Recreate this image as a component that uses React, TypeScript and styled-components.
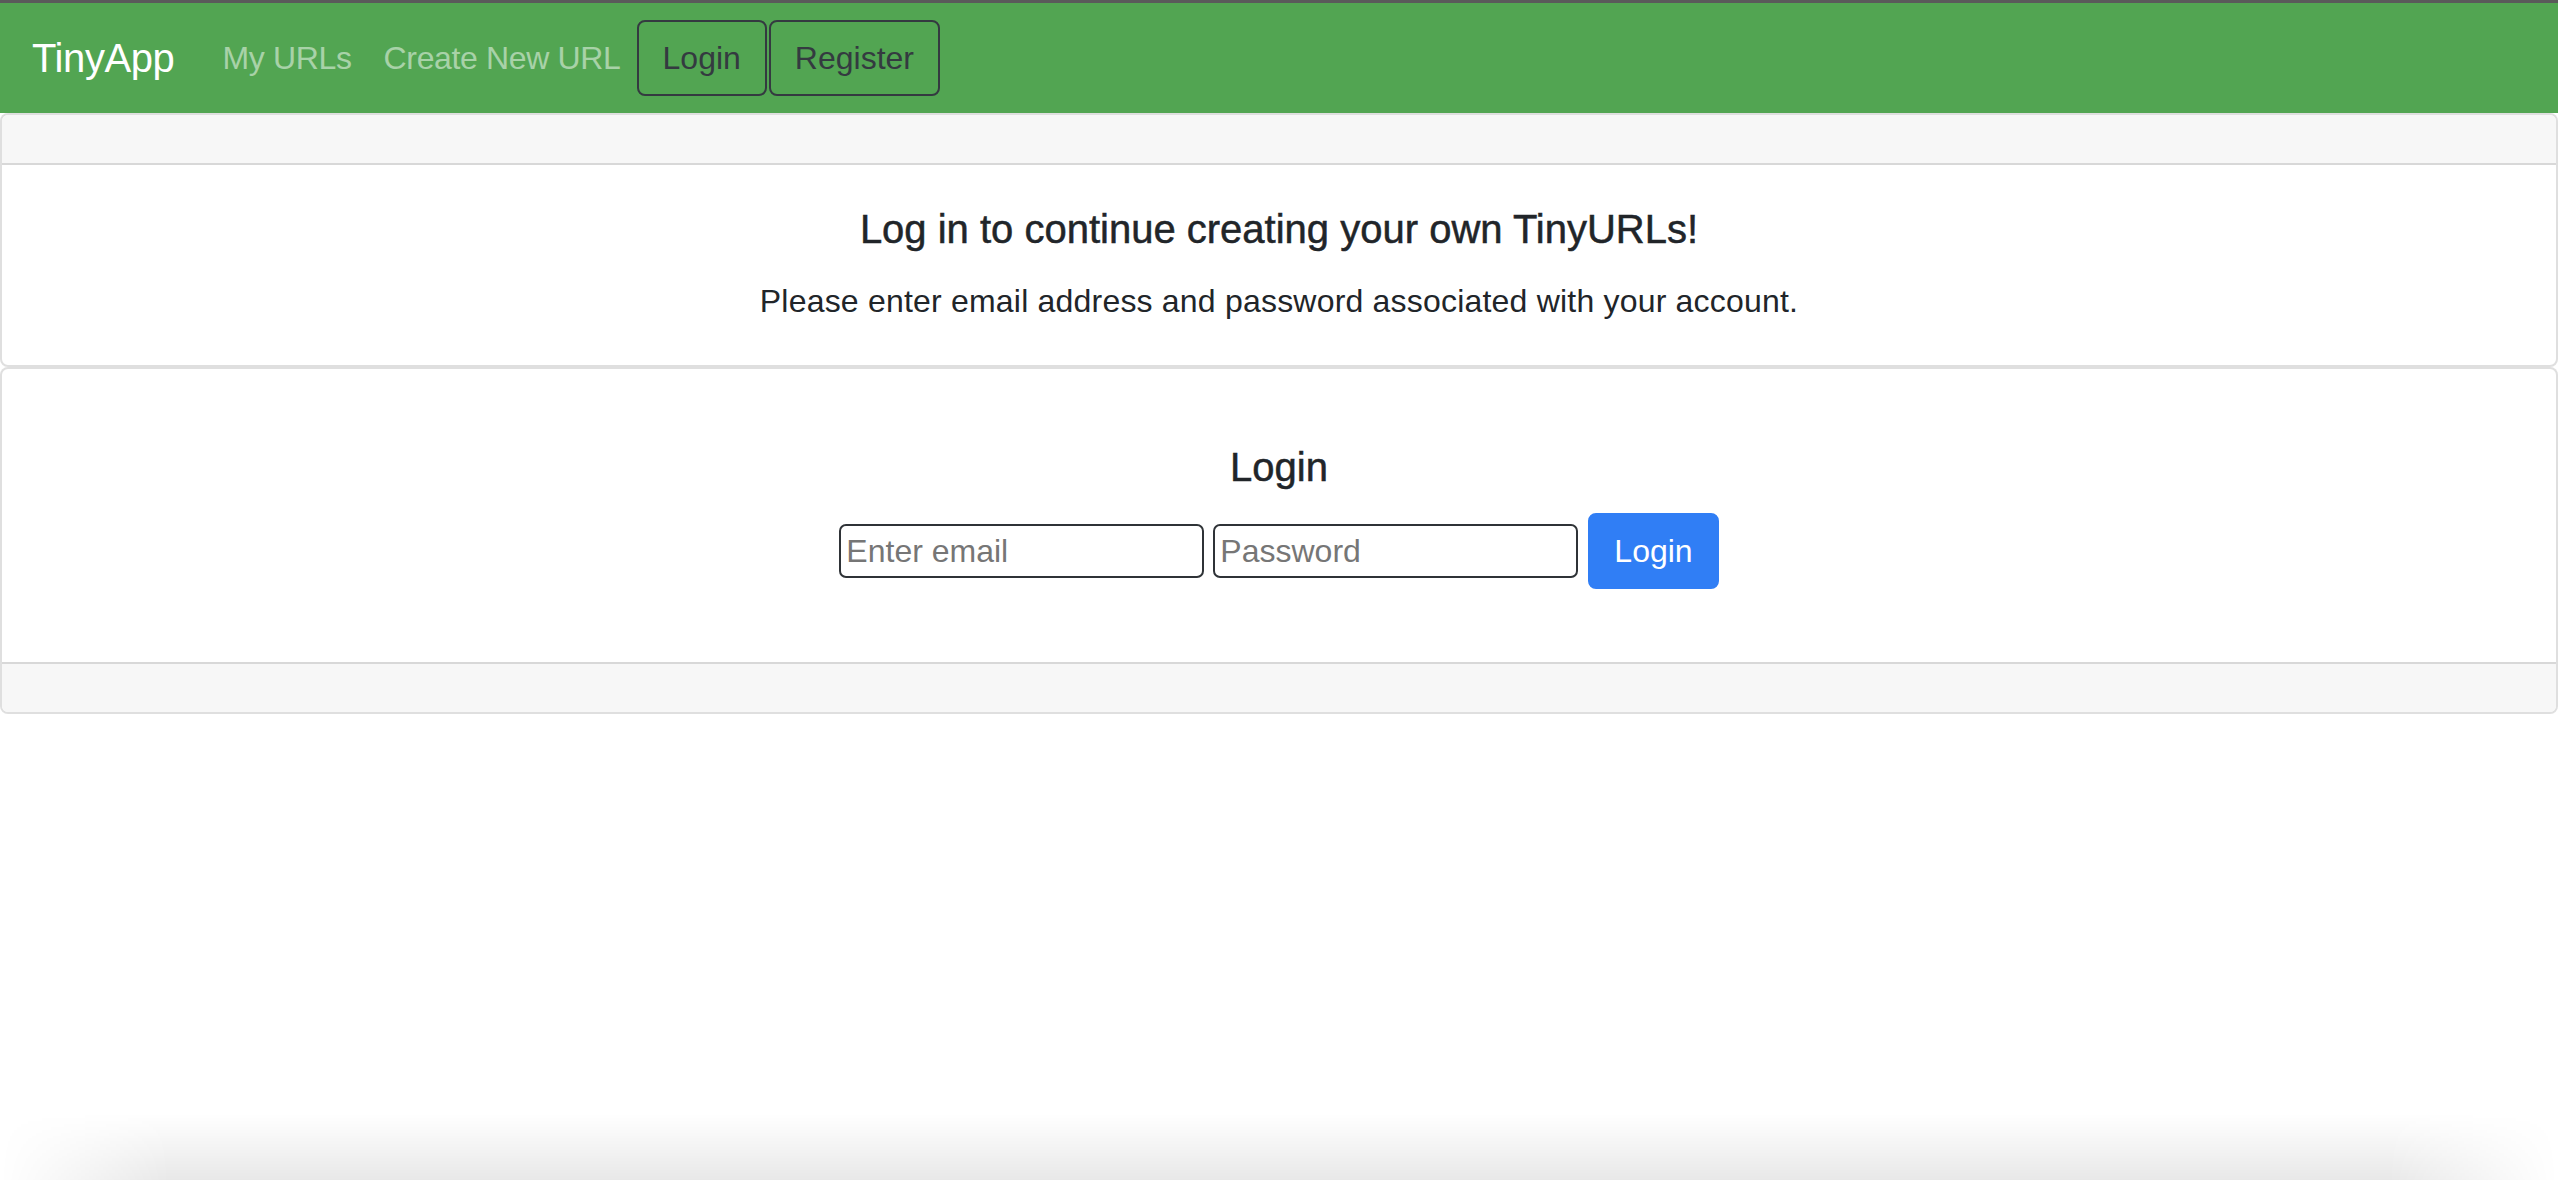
import React from "react";
import styled, { createGlobalStyle } from "styled-components";

const GlobalStyle = createGlobalStyle`
  *, *::before, *::after { box-sizing: border-box; }
  html, body {
    margin: 0;
    padding: 0;
    background: #ffffff;
    font-family: "Liberation Sans", Arial, Helvetica, sans-serif;
    font-size: 32px;
    line-height: 1.5;
    color: #212529;
  }
`;

const Page = styled.div`
  min-height: 100vh;
  background: #ffffff;
`;

const Navbar = styled.nav`
  display: flex;
  align-items: center;
  background: #52a552;
  border-top: 3px solid #5a5a5a;
  padding: 15px 32px;
`;

const Brand = styled.a`
  font-size: 40px;
  line-height: 1.5;
  letter-spacing: -0.4px;
  padding: 10px 0;
  margin-right: 32px;
  color: #ffffff;
  text-decoration: none;
  white-space: nowrap;
`;

const NavLink = styled.a`
  padding: 8px 16px;
  letter-spacing: -0.35px;
  color: rgba(255, 255, 255, 0.5);
  text-decoration: none;
  white-space: nowrap;
`;

const OutlineButton = styled.button`
  font-family: inherit;
  font-size: 32px;
  line-height: 1.5;
  padding: 12px 24px;
  color: #343a40;
  background: transparent;
  border: 2px solid #343a40;
  border-radius: 8px;
  cursor: pointer;
  & + & { margin-left: 2px; }
`;

const Card = styled.section`
  background: #ffffff;
  border: 2px solid rgba(0, 0, 0, 0.125);
  border-radius: 8px;
  overflow: hidden;
`;

const CardHeader = styled.div`
  height: 50px;
  background: #f7f7f7;
  border-bottom: 2px solid rgba(0, 0, 0, 0.125);
`;

const CardFooter = styled.div`
  height: 50px;
  background: #f7f7f7;
  border-top: 2px solid rgba(0, 0, 0, 0.125);
`;

const CardBody = styled.div`
  padding: 40px;
  text-align: center;
`;

const CardTitle = styled.h5<{ $gap: number }>`
  font-size: 40px;
  font-weight: 500;
  line-height: 1.2;
  margin: 0 0 ${(p) => p.$gap}px;
  color: #212529;
  -webkit-text-stroke: 0.5px #212529;
`;

const CardText = styled.p`
  margin: 0;
  letter-spacing: 0.2px;
`;

const LoginForm = styled.form`
  display: flex;
  flex-direction: column;
  align-items: center;
  padding: 34px 0 33px;
`;

const FieldRow = styled.div`
  display: flex;
  align-items: center;
  gap: 9px;
`;

const TextInput = styled.input`
  width: 365px;
  height: 54px;
  padding: 0 5px;
  font-family: inherit;
  font-size: 32px;
  color: #212529;
  background: #ffffff;
  border: 2px solid #2f3337;
  border-radius: 7px;
  outline: none;
  &::placeholder { color: #767676; }
`;

const PrimaryButton = styled.button`
  margin-left: 1px;
  font-family: inherit;
  font-size: 32px;
  line-height: 1.5;
  padding: 12px 24px;
  color: #ffffff;
  background: #307ef5;
  border: 2px solid #307ef5;
  border-radius: 8px;
  cursor: pointer;
`;

const BottomShade = styled.div`
  position: fixed;
  left: 0;
  right: 0;
  bottom: 0;
  height: 66px;
  pointer-events: none;
  background: linear-gradient(to bottom, rgba(0, 0, 0, 0), rgba(0, 0, 0, 0.09));
  -webkit-mask-image: linear-gradient(to right, transparent 0, #000 170px, #000 calc(100% - 170px), transparent 100%);
  mask-image: linear-gradient(to right, transparent 0, #000 170px, #000 calc(100% - 170px), transparent 100%);
`;

export default function App() {
  return (
    <>
      <GlobalStyle />
      <Page>
        <Navbar>
          <Brand href="#">TinyApp</Brand>
          <NavLink href="#">My URLs</NavLink>
          <NavLink href="#">Create New URL</NavLink>
          <OutlineButton type="button">Login</OutlineButton>
          <OutlineButton type="button">Register</OutlineButton>
        </Navbar>

        <Card>
          <CardHeader />
          <CardBody>
            <CardTitle $gap={24}>Log in to continue creating your own TinyURLs!</CardTitle>
            <CardText>Please enter email address and password associated with your account.</CardText>
          </CardBody>
        </Card>

        <Card>
          <CardBody>
            <LoginForm onSubmit={(e) => e.preventDefault()}>
              <CardTitle $gap={22}>Login</CardTitle>
              <FieldRow>
                <TextInput type="email" placeholder="Enter email" />
                <TextInput type="password" placeholder="Password" />
                <PrimaryButton type="submit">Login</PrimaryButton>
              </FieldRow>
            </LoginForm>
          </CardBody>
          <CardFooter />
        </Card>
        <BottomShade />
      </Page>
    </>
  );
}
